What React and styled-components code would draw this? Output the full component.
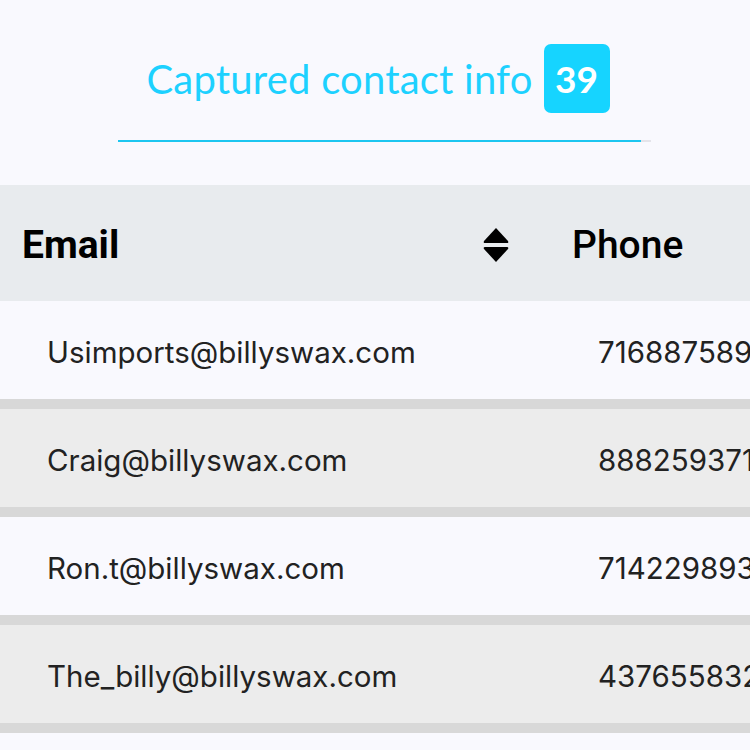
import React from 'react';
import styled, { createGlobalStyle } from 'styled-components';

const GlobalStyle = createGlobalStyle`
  html, body {
    margin: 0;
    padding: 0;
    background: #f9f9fe;
  }
  body {
    width: 750px;
    height: 750px;
    overflow: hidden;
  }
`;

const Page = styled.div`
  width: 750px;
  height: 750px;
  overflow: hidden;
  background: #f9f9fe;
  font-family: Inter, "Liberation Sans", sans-serif;
`;

const TitleBlock = styled.div`
  display: flex;
  flex-direction: column;
  align-items: center;
  padding-top: 44px;
  padding-left: 6px;
`;

const TitleRow = styled.div`
  display: flex;
  align-items: center;
  gap: 11px;
  height: 69px;
`;

const Title = styled.h1`
  margin: 0;
  font-family: Lato, "Open Sans", sans-serif;
  font-weight: 400;
  font-size: 40px;
  color: #1dd1ff;
  letter-spacing: 0.2px;
`;

const Badge = styled.span`
  display: flex;
  align-items: center;
  justify-content: center;
  width: 66px;
  height: 69px;
  border-radius: 7px;
  background: #16d4ff;
  color: #fff;
  font-family: Lato, "Open Sans", sans-serif;
  font-weight: 700;
  font-size: 37px;
`;

const Underline = styled.div`
  margin-top: 27px;
  margin-left: 13px;
  width: 533px;
  height: 2px;
  background: linear-gradient(to right, #1dc6f0 0, #1dc6f0 523px, #e4e4ea 523px);
`;

const Table = styled.div`
  margin-top: 43px;
  width: 900px;
`;

const Row = styled.div`
  display: grid;
  grid-template-columns: 550px 1fr;
  align-items: center;
  height: ${({ $head }) => ($head ? '116px' : '98px')};
  background: ${({ $head, $shaded }) => ($head ? '#e8ebee' : $shaded ? '#ececec' : '#f9f9fe')};
  border-top: ${({ $shaded }) => ($shaded ? '10px solid #d8d8d8' : 'none')};
  border-bottom: ${({ $shaded }) => ($shaded ? '10px solid #d8d8d8' : 'none')};
`;

const HeadCell = styled.div`
  display: flex;
  align-items: center;
  justify-content: space-between;
  padding-left: 22px;
  padding-right: 40px;
  padding-top: 3px;
  font-family: Roboto, "Liberation Sans", sans-serif;
  font-weight: ${({ $first }) => ($first ? 700 : 500)};
  font-size: 39px;
  color: #000;
`;

const Cell = styled.div`
  padding-left: ${({ $phone }) => ($phone ? '48px' : '47px')};
  padding-top: 4px;
  font-family: Inter, "Liberation Sans", sans-serif;
  font-size: 29.5px;
  color: #222;
  white-space: nowrap;
`;

const SortIcon = () => (
  <svg width="28" height="38" viewBox="0 0 28 38">
    <path d="M14 2 L26 15 Q27 17 25 17 L3 17 Q1 17 2 15 Z" fill="#000" />
    <path d="M14 36 L26 23 Q27 21 25 21 L3 21 Q1 21 2 23 Z" fill="#000" />
  </svg>
);

const contacts = [
  { email: 'Usimports@billyswax.com', phone: '7168875891' },
  { email: 'Craig@billyswax.com', phone: '8882593712' },
  { email: 'Ron.t@billyswax.com', phone: '7142298934' },
  { email: 'The_billy@billyswax.com', phone: '4376558321' },
  { email: 'Sales@billyswax.com', phone: '9055512244' },
];

export default function App() {
  return (
    <Page>
      <GlobalStyle />
      <TitleBlock>
        <TitleRow>
          <Title>Captured contact info</Title>
          <Badge>39</Badge>
        </TitleRow>
        <Underline />
      </TitleBlock>
      <Table>
        <Row $head>
          <HeadCell $first>
            <span>Email</span>
            <SortIcon />
          </HeadCell>
          <HeadCell>Phone</HeadCell>
        </Row>
        {contacts.map((c, i) => (
          <Row key={c.email} $shaded={i % 2 === 1}>
            <Cell>{c.email}</Cell>
            <Cell $phone>{c.phone}</Cell>
          </Row>
        ))}
      </Table>
    </Page>
  );
}
